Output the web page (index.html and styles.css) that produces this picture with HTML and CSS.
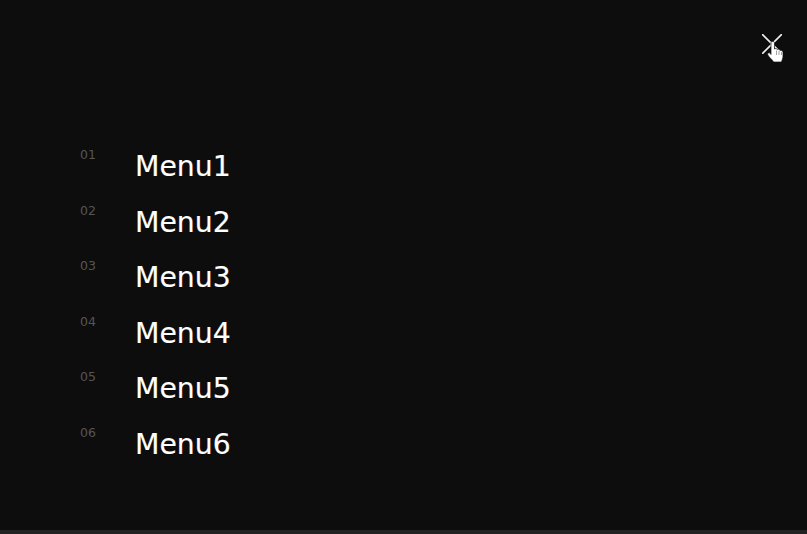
FILE: index.html
```html
<!DOCTYPE html>
<html lang="en">
<head>
<meta charset="UTF-8">
<meta name="viewport" content="width=device-width, initial-scale=1.0">
<title>Menu</title>
<link rel="stylesheet" href="styles.css">
</head>
<body>
    <div class="overlay">
        <div class="top">
            <button type="button" class="close">
                <svg width="20" height="20" viewBox="0 0 20 20">
                    <path d="M0 0L20 20M20 0L0 20" stroke="#eee" stroke-width="1.600" fill="none"/>
                </svg>
                <svg class="hand" width="18" height="22" viewBox="0 0 18 22">
                    <path d="M4 1.500C4 .2 7.500 .2 7.500 1.500V8C8.200 7.300 10 7.400 10.300 8.500C11 8 12.700 8.200 13 9.500C13.800 9 16 9.600 16 11.500V15C16 17.500 15 19 14.500 21H6.500C5.500 18.500 2.500 17 .8 14C0 12.500 1.500 11 3 12L4 13.500Z" fill="#fff" stroke="#111" stroke-width=".7"/>
                    <path d="M9.500 9.500V14M12 10V14M14.500 11V14" stroke="#777" stroke-width=".7" fill="none"/>
                </svg>
            </button>
        </div>
        <ul class="menu">
            <li class="menu-item"><span class="num">01</span><a class="label">Menu1</a></li>
            <li class="menu-item"><span class="num">02</span><a class="label">Menu2</a></li>
            <li class="menu-item"><span class="num">03</span><a class="label">Menu3</a></li>
            <li class="menu-item"><span class="num">04</span><a class="label">Menu4</a></li>
            <li class="menu-item"><span class="num">05</span><a class="label">Menu5</a></li>
            <li class="menu-item"><span class="num">06</span><a class="label">Menu6</a></li>
        </ul>
    </div>
</body>
</html>
```

FILE: styles.css
```css
html, body {
    margin: 0;
    height: 100%;
    overflow: hidden;
}
body {
    background-color: #0d0d0d;
    color: white;
    font-family: "DejaVu Sans", Verdana, sans-serif;
}
.overlay {
    height: 530px;
    border-bottom: 4px solid #222;
}
.top {
    display: flex;
    justify-content: flex-end;
    padding: 34px 25px 0 0;
    height: 105px;
}
.close {
    position: relative;
    width: 20px;
    height: 20px;
    padding: 0;
    border: none;
    background: none;
}
.close svg {
    display: block;
}
.close .hand {
    position: absolute;
    left: 5px;
    top: 7px;
}
.menu {
    list-style: none;
    margin: 0;
    padding: 0 0 0 80px;
}
.menu-item {
    display: flex;
    height: 55.6px;
}
.num {
    width: 55px;
    padding-top: 8px;
    font-size: 12.500px;
    line-height: 15px;
    color: #555;
}
.label {
    font-size: 28.300px;
    line-height: 55px;
    color: #fff;
    -webkit-text-stroke: 0.15px #fff;
}
```
